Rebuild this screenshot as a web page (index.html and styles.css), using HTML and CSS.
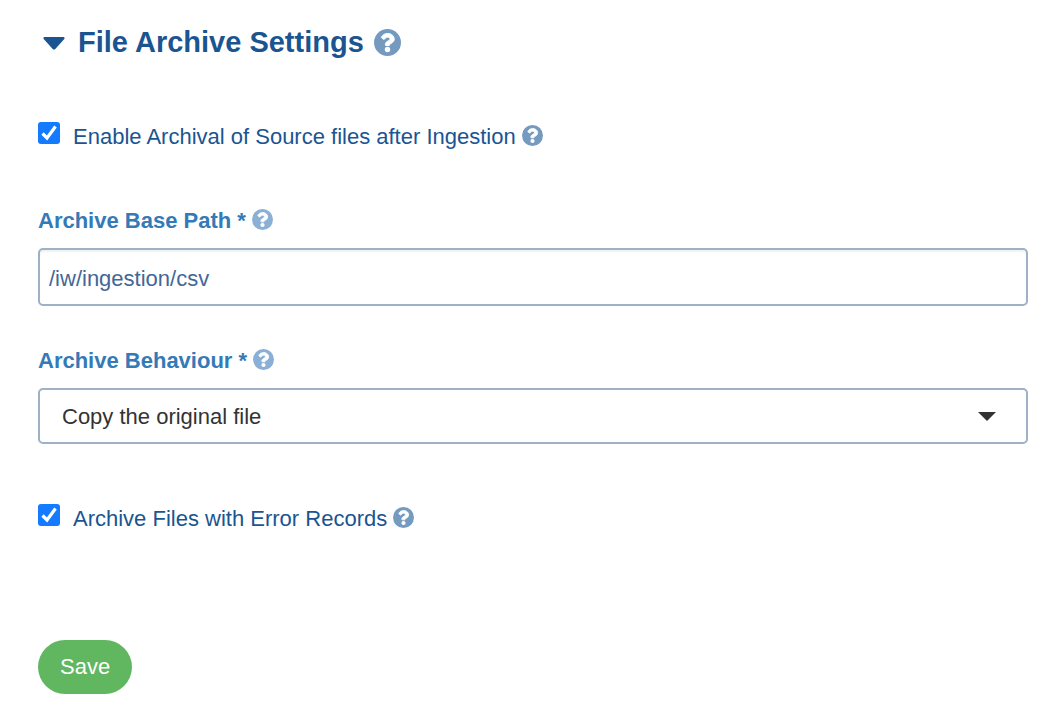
FILE: index.html
```html
<!DOCTYPE html>
<html lang="en">
<head>
  <meta charset="UTF-8">
  <meta name="viewport" content="width=device-width, initial-scale=1.0">
  <title>File Archive Settings</title>
  <link rel="stylesheet" href="styles.css">
</head>
<body>
  <svg class="sprite" aria-hidden="true">
    <symbol id="help" viewBox="8 8 496 496">
      <circle cx="256" cy="256" r="248"/>
      <path fill="#fff" stroke="#fff" stroke-width="18" d="M262.655 90c-54.497 0-89.255 22.957-116.549 63.758-3.536 5.286-2.353 12.415 2.715 16.258l34.699 26.310c5.205 3.947 12.621 3.008 16.665-2.122 17.864-22.658 30.113-35.797 57.303-35.797 20.429 0 45.698 13.148 45.698 32.958 0 14.976-12.363 22.667-32.534 33.976C247.128 238.528 216 254.941 216 296v4c0 6.627 5.373 12 12 12h56c6.627 0 12-5.373 12-12v-1.333c0-28.462 83.186-29.647 83.186-106.667 0-58.002-60.165-102-116.531-102z"/>
      <circle cx="256" cy="386" r="50" fill="#fff"/>
    </symbol>
  </svg>

  <form class="settings">
    <div class="section-header">
      <h2>
        <button type="button" class="toggle" aria-expanded="true">
          <svg class="toggle-icon" viewBox="0 0 22 15"><path d="M1.500 2h19c1 0 1.500 1.200.800 2l-9 10c-.700.800-1.900.800-2.600 0l-9-10C0 3.200.500 2 1.500 2z"/></svg>
          File Archive Settings
        </button>
      </h2>
      <button type="button" class="help help-large" aria-label="Help"><svg><use href="#help"/></svg></button>
    </div>

    <div class="check-row">
      <input type="checkbox" id="enable-archival" checked>
      <label for="enable-archival">Enable Archival of Source files after Ingestion</label>
      <button type="button" class="help" aria-label="Help"><svg><use href="#help"/></svg></button>
    </div>

    <div class="field">
      <div class="field-header">
        <label for="base-path">Archive Base Path *</label>
        <button type="button" class="help" aria-label="Help"><svg><use href="#help"/></svg></button>
      </div>
      <input type="text" class="control" id="base-path" value="/iw/ingestion/csv">
    </div>

    <div class="field">
      <div class="field-header">
        <label for="behaviour">Archive Behaviour *</label>
        <button type="button" class="help" aria-label="Help"><svg><use href="#help"/></svg></button>
      </div>
      <select class="control" id="behaviour">
        <option>Copy the original file</option>
      </select>
    </div>

    <div class="check-row check-row-errors">
      <input type="checkbox" id="error-records" checked>
      <label for="error-records">Archive Files with Error Records</label>
      <button type="button" class="help" aria-label="Help"><svg><use href="#help"/></svg></button>
    </div>

    <button type="submit" class="save">Save</button>
  </form>
</body>
</html>
```
FILE: styles.css
```css
* {
  box-sizing: border-box;
}

body {
  margin: 0;
  background: #fff;
  color: #1a5591;
  font-family: "Liberation Sans", Arial, sans-serif;
  font-size: 22px;
  line-height: 28px;
}

button,
input,
select {
  font: inherit;
}

.sprite {
  display: none;
}

.settings {
  padding: 24px 36px 14px 38px;
}

.section-header {
  display: flex;
  align-items: center;
  gap: 10px;
  margin-bottom: 62px;
}

h2 {
  margin: 0;
  font-size: 29px;
  line-height: 36px;
}

.toggle {
  display: flex;
  align-items: center;
  gap: 13px;
  padding: 0 0 0 5px;
  border: none;
  background: none;
  color: inherit;
  cursor: pointer;
}

.toggle-icon {
  width: 22px;
  height: 15px;
  fill: currentColor;
}

.help {
  display: flex;
  padding: 0;
  border: none;
  background: none;
  color: #759abf;
  cursor: pointer;
}

.help svg {
  width: 21px;
  height: 21px;
  fill: currentColor;
}

.help-large svg {
  width: 27px;
  height: 27px;
}

.check-row {
  display: flex;
  align-items: center;
  gap: 6px;
  margin-bottom: 55px;
}

.check-row input {
  appearance: none;
  width: 22px;
  height: 22px;
  margin: 0 7px 8px 0;
  border-radius: 3px;
  background: #147aff url("data:image/svg+xml,%3Csvg xmlns='http://www.w3.org/2000/svg' viewBox='0 0 22 22'%3E%3Cpath d='M4.500 11.500l4.500 4.500L17.500 4.500' fill='none' stroke='%23fff' stroke-width='3.200'/%3E%3C/svg%3E");
}

.check-row .help,
.field-header .help {
  margin-bottom: 3px;
}

.check-row-errors {
  margin: 60px 0 106px;
}

.field {
  margin-bottom: 41px;
}

.field-header {
  display: flex;
  align-items: center;
  gap: 6px;
  margin-bottom: 13px;
  color: #337ab7;
  font-weight: bold;
}

.field-header .help {
  color: #8ab0d6;
}

.control {
  display: block;
  width: 100%;
  height: 58px;
  padding: 4px 9px 0;
  border: 2px solid #9fb1c5;
  border-radius: 5px;
  background: #fff;
  color: #436795;
  box-shadow: inset 0 2px 2px rgba(0, 0, 0, 0.06);
}

select.control {
  appearance: none;
  height: 56px;
  padding: 2px 60px 0 22px;
  background: #fff url("data:image/svg+xml,%3Csvg xmlns='http://www.w3.org/2000/svg' viewBox='0 0 18 9'%3E%3Cpath d='M0 0h18l-9 9z' fill='%23333'/%3E%3C/svg%3E") no-repeat right 30px center / 18px 9px;
  color: #333;
  box-shadow: none;
}

.save {
  height: 54px;
  padding: 0 22px;
  border: none;
  border-radius: 27px;
  background: #61b660;
  color: #fff;
  cursor: pointer;
}
```
